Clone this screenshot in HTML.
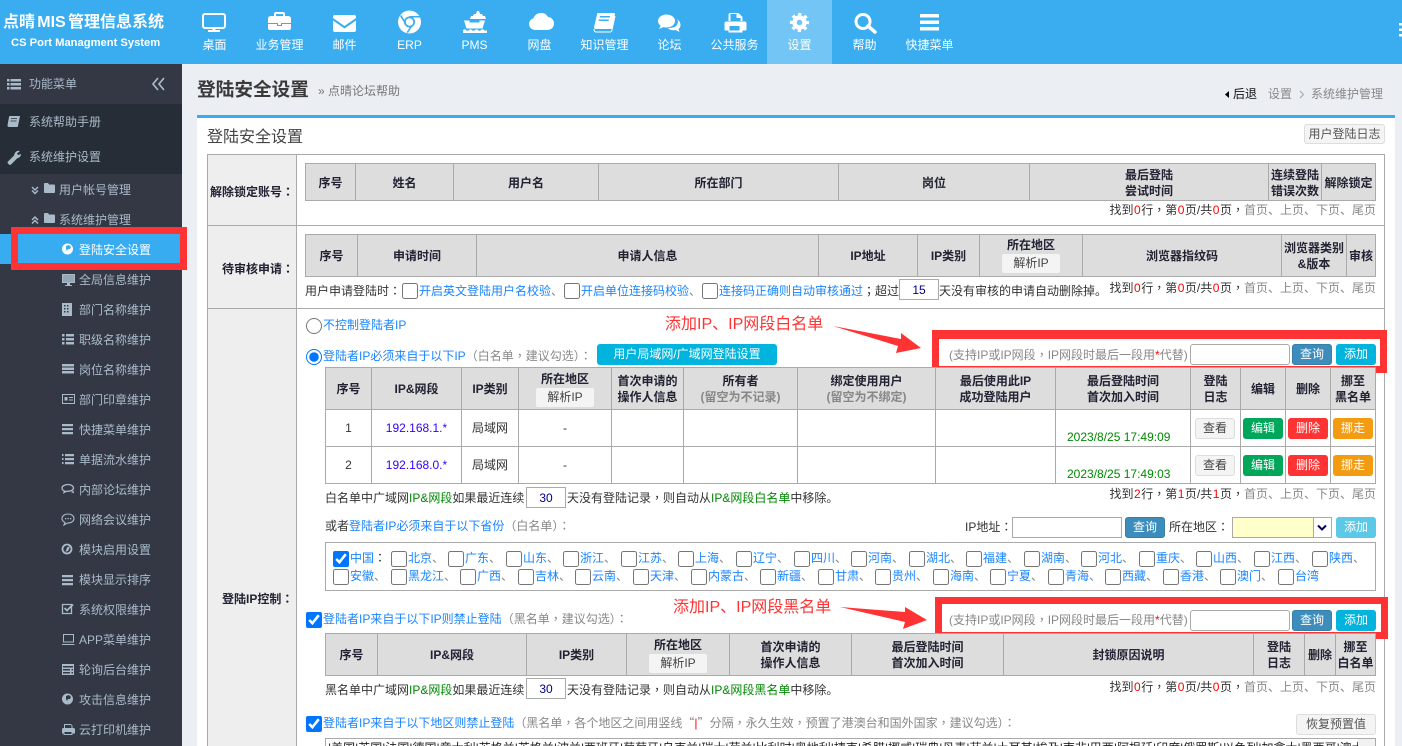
<!DOCTYPE html>
<html><head><meta charset="utf-8"><title>登陆安全设置</title>
<style>
*{box-sizing:border-box}
html,body{margin:0;padding:0;width:1402px;height:746px;overflow:hidden;background:#ebeef3}
body{position:relative;font:12px/16px "Liberation Sans","Noto Sans CJK SC",sans-serif;color:#333}
u{text-decoration:none;font-family:"Noto Sans CJK TC",sans-serif}
em{font-style:normal;font-family:"Noto Sans CJK SC",sans-serif}
.a,.t,.s,.n,.b,input,select{position:absolute}
.t,.s,.n{white-space:nowrap}
.n{top:37px;width:65px;text-align:center;color:#fff}
.s{left:79px;color:#a9bac8;margin-top:1px}
.l{color:#1a85ff}.g{color:#888}.r{color:#f00}.gr{color:#080}.k{color:#333}
.f .r{padding:0 .5px}
.b{height:21px;line-height:19px;text-align:center;border-radius:3px;color:#fff;border:1px solid transparent}
.q{background:#3c8dbc;border-color:#367fa9}.ad{background:#00b4dd}.dis{background:#5bc8e8}
.w{background:#f4f4f4;border-color:#ddd;color:#444}
.gb{background:#00a65a}.rb{background:#f33}.ob{background:#f39c12}
table{position:absolute;border-collapse:separate;border-spacing:0;table-layout:fixed;border-left:1px solid #aaa;border-top:1px solid #aaa}
td,th{border-right:1px solid #aaa;border-bottom:1px solid #aaa;padding:0;text-align:center;vertical-align:middle;overflow:hidden;font-size:12px;line-height:16px}
th{background:#ddd;color:#223;font-weight:700}
th i{font-style:normal;color:#888}
input{margin:0;padding:0}
input[type=checkbox],input[type=radio]{width:16px;height:16px}
input[type=text]{background:#fff;border:1px solid #aaa;text-align:center;color:#008;font:12px "Liberation Sans",sans-serif}
.rbx{border:7px solid #f33}
.rt{color:#f33;font-size:16px;line-height:20px}
.p{color:#1a85ff}
.h{font-weight:700;color:#223}
</style></head><body>

<!-- top bar -->
<div class="a" style="left:0;top:0;width:1402px;height:64px;background:#39adf0"></div>
<div class="a" style="left:767px;top:0;width:65px;height:64px;background:#72c5f5"></div>
<div class="t" style="left:3px;top:13px;color:#fff;font-size:16px;line-height:20px;font-weight:700">点晴<span style="word-spacing:-2.200px"> MIS </span>管理信息系统</div>
<div class="t" style="left:11px;top:35px;color:#fff;font-size:11.200px;font-weight:700">CS Port Managment System</div>

<svg class="a" style="left:0;top:0" width="1402" height="64" fill="#fff">
 <rect x="203" y="14" width="22" height="14" rx="2" fill="none" stroke="#fff" stroke-width="2"/><rect x="212.500" y="28" width="3" height="3"/><rect x="208" y="30" width="12" height="2"/>
 <path d="M268 19q0-3 3-3h3v-2q0-2 2-2h7q2 0 2 2v2h3q3 0 3 3v4h-23zM276 16h7v-2h-7zM268 24h9v2h5v-2h9v4q0 2-2 2h-19q-2 0-2-2zM278 22h3v3h-3z"/>
 <path d="M333 17q0-2 2-2h19q2 0 2 2v1l-11.500 8-11.500-8zM333 20.500l11.500 8 11.500-8V30q0 2-2 2h-19q-2 0-2-2z"/>
 <circle cx="409.500" cy="22" r="11.500"/><circle cx="409.500" cy="22" r="5.500" fill="#39adf0"/><circle cx="409.500" cy="22" r="3.800"/><path d="M409.500 16h10.500v1.500h-10.500zM405 24l-5-8 1.300-1 5 8zM412.500 26l-4.500 7-1.400-.8 4.500-7z" fill="#39adf0"/>
 <path d="M470 19l1-3h2l1-2h2l1-3h2l1 3h2l1 2h2l1 3zM464 20.500h5.500v2h10v-2h5.500l-2.500 8h-16zM463 30q2-1.500 3 0t3 0 3 0 3 0 3 0 3 0 3 0 3 0v3h-24z"/>
 <path d="M535 30a6 6 0 0 1-1.500-11.800A8 8 0 0 1 548 17a6.500 6.500 0 0 1-1 13z"/>
 <path d="M598 13h16q1 0 1 1l-3 14q0 1-1 1h-15q-2 0-2-1.500l3-13q0-1.500 1-1.500z"/><path d="M615 16l-3 14q-.2 2-2 2h-14q-2 0-2-3" fill="none" stroke="#fff"/><path d="M600 16h10l-.4 1.500h-10zM599 19.500h10l-.4 1.500h-10z" fill="#39adf0"/>
 <ellipse cx="666.500" cy="21" rx="8.500" ry="6.500"/><path d="M661 25l-2 4 6-2.500z"/><path d="M676.500 19q4 2 4 6 0 2.500-2 4l1 3-4-2q-2 .5-4 0-2.500-.5-3.500-2 7 0 9-3 1.500-3 .5-6z"/>
 <path d="M729 21v-6q0-2 2-2h8l4 4v4h-2v-3h-4v-4h-6v7zM727 21.500h18q2 0 2 2v6q0 1-1 1h-3v2h-14v-2h-3q-1 0-1-1v-6q0-2 2-2zM730 26v4.500h10V26z" transform="translate(-.500 0)"/>
 <circle cx="799.500" cy="22.500" r="5" fill="none" stroke="#fff" stroke-width="4.400"/><circle cx="799.500" cy="22.500" r="8.300" fill="none" stroke="#fff" stroke-width="2.600" stroke-dasharray="3.300 3.220" stroke-dashoffset="1.650"/>
 <circle cx="863" cy="21.500" r="7" fill="none" stroke="#fff" stroke-width="3"/><path d="M868 26l7 6" stroke="#fff" stroke-width="3.500" stroke-linecap="round"/>
 <path d="M920 14h19v3.500h-19zM920 20.500h19v3.500h-19zM920 27h19v3.500h-19z"/>
 <path d="M1399 23h3v2.500h-3zM1399 28.500h3v2.500h-3zM1399 34h3v2.500h-3z"/>
</svg>

<div class="n" style="left:182px">桌面</div><div class="n" style="left:247px">业务管理</div><div class="n" style="left:312px">邮件</div><div class="n" style="left:377px">ERP</div><div class="n" style="left:442px">PMS</div><div class="n" style="left:507px">网盘</div><div class="n" style="left:572px">知识管理</div><div class="n" style="left:637px">论坛</div><div class="n" style="left:702px">公共服务</div><div class="n" style="left:767px">设置</div><div class="n" style="left:832px">帮助</div><div class="n" style="left:897px">快捷菜单</div>

<!-- sidebar -->
<div class="a" style="left:0;top:64px;width:182px;height:682px;background:#343845"></div>
<div class="a" style="left:0;top:104px;width:182px;height:70px;background:#272d36"></div>
<div class="a" style="left:0;top:234px;width:182px;height:30px;background:#38acf0"></div>
<div class="s" style="left:29px;top:76px;margin-top:0">功能菜单</div>
<div class="s" style="left:29px;top:113px">系统帮助手册</div>
<div class="s" style="left:29px;top:148px">系统维护设置</div>
<div class="s" style="left:59px;top:181px">用户帐号管理</div>
<div class="s" style="left:59px;top:211px">系统维护管理</div>
<div class="s" style="top:241px;color:#fff">登陆安全设置</div>
<div class="s" style="top:271px">全局信息维护</div>
<div class="s" style="top:301px">部门名称维护</div>
<div class="s" style="top:331px">职级名称维护</div>
<div class="s" style="top:361px">岗位名称维护</div>
<div class="s" style="top:391px">部门印章维护</div>
<div class="s" style="top:421px">快捷菜单维护</div>
<div class="s" style="top:451px">单据流水维护</div>
<div class="s" style="top:481px">内部论坛维护</div>
<div class="s" style="top:511px">网络会议维护</div>
<div class="s" style="top:541px">模块启用设置</div>
<div class="s" style="top:571px">模块显示排序</div>
<div class="s" style="top:601px">系统权限维护</div>
<div class="s" style="top:631px">APP菜单维护</div>
<div class="s" style="top:661px">轮询后台维护</div>
<div class="s" style="top:691px">攻击信息维护</div>
<div class="s" style="top:721px">云打印机维护</div>

<svg class="a" style="left:0;top:64px" width="182" height="682" viewBox="0 64 182 682" fill="#a9bac8">
 <path d="M7 79h2.500v2.500H7zM10.500 79H21v2.500H10.500zM7 83h2.500v2.500H7zM10.500 83H21v2.500H10.500zM7 87h2.500v2.500H7zM10.500 87H21v2.500H10.500z"/>
 <path d="M158 78l-5 6 5 6M164 78l-5 6 5 6" fill="none" stroke="#a9bac8" stroke-width="1.700"/>
 <path d="M10 116h10l-2 10q0 1-1 1H9q-1.500 0-1.500-1.500l1.500-8.500q0-1 1-1z"/><path d="M11 118.500h6M10.500 121h6" stroke="#272d36" stroke-width=".8"/>
 <path d="M20 151l-3 2.500 1 1.500 3-1q0 3-3 4l-1 .5-6 6q-1 1-2 0l-1-1q-1-1 0-2l6-6q.5-3 3-4.500 1.500-.5 3 0z"/>
 <path d="M32 187l3 3 3-3M32 190.500l3 3 3-3" fill="none" stroke="#a9bac8" stroke-width="1.500"/>
 <path d="M32 220l3-3 3 3M32 223.500l3-3 3 3" fill="none" stroke="#a9bac8" stroke-width="1.500"/>
 <path d="M44 184q0-1 1-1h3l1 1.500h5q1 0 1 1V192q0 1-1 1h-9q-1 0-1-1zM44 214q0-1 1-1h3l1 1.500h5q1 0 1 1V222q0 1-1 1h-9q-1 0-1-1z"/>
 <circle cx="67.500" cy="249" r="5.500" fill="#fff"/><path d="M66 246l3-1 2 2-1 2-2 0-1 2-1-2z" fill="#38acf0"/>
 <path fill-rule="evenodd" d="M62 274h13v9h-13zM63 275v7h11v-7zM67 283h3v2h2v1h-7v-1h2z"/><rect x="63" y="275" width="11" height="7" opacity=".85"/>
 <path fill-rule="evenodd" d="M62 303h10v13H62zM64 305v1.500h1.500V305zM67 305v1.500h1.500V305zM64 308v1.500h1.500V308zM67 308v1.500h1.500V308zM64 311v1.500h1.500V311zM67 311v1.500h1.500V311z"/>
 <path d="M62 334h2.500v2.500H62zM66 334h8v2.500h-8zM62 338h2.500v2.500H62zM66 338h8v2.500h-8zM62 342h2.500v2.500H62zM66 342h8v2.500h-8z"/>
 <path d="M62 364h12v2.500H62zM62 367.500h12v2.500H62zM62 371h12v2.500H62z"/>
 <path fill-rule="evenodd" d="M62 394h13v10H62zM63 395v8h11v-8zM64.500 397h3v3.500h-3zM69 397h4v1h-4zM69 399.500h4v1h-4z"/>
 <path d="M62 424h11v2.300H62zM62 428h11v2.300H62zM62 432h11v2.300H62z"/>
 <path d="M62 454h1.500v2H62zM65 454h9v2.300h-9zM62 458h1.500v2H62zM65 458h9v2.300h-9zM62 462h1.500v2H62zM65 462h9v2.300h-9z"/>
 <path d="M68 484.500c-3 0-6 1.500-6 3.500 0 1.500 1 2.500 2.500 3l-.5 1.500 2.500-1.200h1.500c3 0 5.500-1.500 5.500-3.300s-2.500-3.500-5.500-3.500z" fill="none" stroke="#a9bac8" stroke-width="1.300"/><path d="M71 492l3 1.500-.5-3z"/>
 <path d="M68 514c-3.500 0-6 2-6 4.500 0 1.800 1.500 3.300 3 4l-1 2.500 3.500-2h.5c3.500 0 6-2 6-4.500s-2.500-4.500-6-4.500z" fill="none" stroke="#a9bac8" stroke-width="1.100"/><path d="M65 518h1.300v1.300H65zM67.500 518h1.300v1.300h-1.300zM70 518h1.300v1.300H70z"/>
 <circle cx="67" cy="549" r="4.500" fill="none" stroke="#a9bac8" stroke-width="1.800"/><path d="M70 546l-1.500 4.500-3 1.500 1.500-4.500z"/>
 <path d="M62 575h11v2.300H62zM62 579h11v2.300H62zM62 583h11v2.300H62z"/>
 <path d="M62.500 604.500h9v9h-9z" fill="none" stroke="#a9bac8" stroke-width="1.300"/><path d="M64.500 608l2.500 2.500 6-6" fill="none" stroke="#a9bac8" stroke-width="1.800"/>
 <path d="M63.500 634.500h10V642h-10z" fill="none" stroke="#a9bac8"/><path d="M62 644h12.500v1H62z"/>
 <path fill-rule="evenodd" d="M62 664h12v11H62zM63 666v1.500h10V666zM63 669v1.500h7V669zM71.500 669v1.500H73V669zM63 672v1.500h7V672zM71.500 672v1.500H73V672z"/>
 <circle cx="67.500" cy="699" r="5.500"/><path d="M66 696l3-1 2 2-1 2-2 0-1 2-1-2z" fill="#343845"/>
 <path fill-rule="evenodd" d="M64 724h7l1.500 1.500V728h1q1.500 0 1.500 1.500v4h-2.500v1.500h-9v-1.500H62v-4q0-1.500 1.500-1.500h.5zM65 725v3h6.500v-2.300l-.7-.7zM64.500 732v2h7v-2z"/>
</svg>
<div class="a rbx" style="left:11px;top:227px;width:176px;height:43px"></div>

<!-- header -->
<div class="t" style="left:197px;top:78px;font-size:18.670px;line-height:24px;font-weight:700;color:#3a3a3a">登陆安全设置</div>
<div class="t" style="left:318px;top:83px;color:#777">» 点晴论坛帮助</div>
<svg class="a" style="left:1225px;top:91px" width="5" height="7"><path d="M4 0v7L0 3.500z" fill="#000"/></svg>
<div class="t" style="left:1233px;top:86px;color:#111">后退</div>
<div class="t" style="left:1268px;top:86px;color:#888">设置</div>
<svg class="a" style="left:1299px;top:90px" width="6" height="9"><path d="M1 1l3.500 3.500L1 8" fill="none" stroke="#9aa" stroke-width="1"/></svg>
<div class="t" style="left:1311px;top:86px;color:#888">系统维护管理</div>

<!-- panel -->
<div class="a" style="left:197px;top:115px;width:1198px;height:631px;background:#fff;border-top:3px solid #38acf0"></div>
<div class="t" style="left:207px;top:127px;font-size:16px;line-height:22px;color:#444">登陆安全设置</div>
<div class="b w" style="left:1304px;top:124px;width:81px;height:20px;line-height:18px;color:#555">用户登陆日志</div>

<!-- outer frame -->
<div class="a" style="left:207px;top:154px;width:1178px;height:592px;border:1px solid #aaa;border-bottom:0"></div>
<div class="a" style="left:208px;top:155px;height:591px;background:#eee;border-right:1px solid #aaa;width:89px"></div>
<div class="a" style="left:208px;top:225px;width:1176px;height:1px;background:#aaa"></div>
<div class="a" style="left:208px;top:308px;width:1176px;height:1px;background:#aaa"></div>
<div class="t h" style="left:210px;top:184px">解除锁定账号<u>：</u></div>
<div class="t h" style="left:222px;top:261px">待审核申请<u>：</u></div>
<div class="t h" style="left:222px;top:591px">登陆IP控制<u>：</u></div>

<!-- table 1 -->
<table style="left:305px;top:163px;width:1071px">
<colgroup><col style="width:50px"><col style="width:98px"><col style="width:145px"><col style="width:240px"><col style="width:191px"><col style="width:239px"><col style="width:53px"><col style="width:54px"></colgroup>
<tr style="height:37px"><th style="padding-top:1px">序号</th><th style="padding-top:1px">姓名</th><th style="padding-top:1px">用户名</th><th style="padding-top:1px">所在部门</th><th style="padding-top:1px">岗位</th><th style="padding-top:1px">最后登陆<br>尝试时间</th><th style="padding-top:1px">连续登陆<br>错误次数</th><th style="padding-top:1px">解除锁定</th></tr>
</table>
<div class="t f" style="right:26px;top:202px">找到<span class="r">0</span>行<u>，</u>第<span class="r">0</span>页/共<span class="r">0</span>页<u>，</u><span class="g">首页、上页、下页、尾页</span></div>

<!-- table 2 -->
<table style="left:305px;top:234px;width:1071px">
<colgroup><col style="width:52px"><col style="width:119px"><col style="width:342px"><col style="width:99px"><col style="width:62px"><col style="width:103px"><col style="width:199px"><col style="width:65px"><col style="width:29px"></colgroup>
<tr style="height:42px"><th>序号</th><th>申请时间</th><th>申请人信息</th><th>IP地址</th><th>IP类别</th><th></th><th>浏览器指纹码</th><th>浏览器类别<br>&amp;版本</th><th>审核</th></tr>
</table>
<div class="t h" style="left:1007px;top:237px">所在地区</div>
<div class="b w" style="left:1001px;top:253px;width:60px">解析IP</div>

<div class="t" style="left:305px;top:283px">用户申请登陆时<u>：</u></div>
<input type="checkbox" style="left:402px;top:283px">
<div class="t l" style="left:419px;top:283px">开启英文登陆用户名校验<span class="g">、</span></div>
<input type="checkbox" style="left:564px;top:283px">
<div class="t l" style="left:581px;top:283px">开启单位连接码校验<span class="g">、</span></div>
<input type="checkbox" style="left:702px;top:283px">
<div class="t l" style="left:719px;top:283px">连接码正确则自动审核通过<span class="k"><u>；</u>超过</span></div>
<input type="text" value="15" style="left:899px;top:279px;width:40px;height:21px">
<div class="t" style="left:939px;top:283px">天没有审核的申请自动删除掉。</div>
<div class="t f" style="right:26px;top:280px">找到<span class="r">0</span>行<u>，</u>第<span class="r">0</span>页/共<span class="r">0</span>页<u>，</u><span class="g">首页、上页、下页、尾页</span></div>

<!-- whitelist -->
<input type="radio" name="x" style="left:306px;top:318px">
<div class="t l" style="left:323px;top:317px">不控制登陆者IP</div>
<input type="radio" name="x" checked style="left:306px;top:349px">
<div class="t l" style="left:323px;top:348px">登陆者IP必须来自于以下IP<span class="g"><u>（</u>白名单<u>，</u>建议勾选<u>）：</u></span></div>
<div class="b" style="left:597px;top:344px;width:180px;background:#00b4dd">用户局域网/广域网登陆设置</div>

<div class="t rt" style="left:665px;top:315px">添加IP、IP网段白名单</div>
<svg class="a" style="left:0;top:0" width="1402" height="746" fill="#f33">
 <path d="M833 326L901 339L901 333L921 348L896 353L898 346z"/>
 <path d="M840 607L905 612L905 607L927 620L903 629L905 622z"/>
</svg>
<div class="a" style="left:932px;top:330px;width:455px;height:43px;border:7px solid #f33;border-top-width:9px"></div>
<div class="t g" style="left:949px;top:347px">(支持IP或IP网段<u>，</u>IP网段时最后一段用<span class="r">*</span>代替)</div>
<input type="text" style="left:1190px;top:344px;width:100px;height:21px;border-radius:3px">
<div class="b q" style="left:1292px;top:344px;width:40px">查询</div>
<div class="b ad" style="left:1336px;top:344px;width:40px">添加</div>

<table style="left:325px;top:367px;width:1051px">
<colgroup><col style="width:46px"><col style="width:90px"><col style="width:57px"><col style="width:93px"><col style="width:72px"><col style="width:114px"><col style="width:138px"><col style="width:120px"><col style="width:135px"><col style="width:50px"><col style="width:45px"><col style="width:45px"><col style="width:45px"></colgroup>
<tr style="height:42px"><th>序号</th><th>IP&amp;网段</th><th>IP类别</th><th></th><th>首次申请的<br>操作人信息</th><th>所有者<br><i>(留空为不记录)</i></th><th>绑定使用用户<br><i>(留空为不绑定)</i></th><th>最后使用此IP<br>成功登陆用户</th><th>最后登陆时间<br>首次加入时间</th><th>登陆<br>日志</th><th>编辑</th><th>删除</th><th>挪至<br>黑名单</th></tr>
<tr style="height:37px"><td>1</td><td style="color:#30f">192.168.1.*</td><td>局域网</td><td>-</td><td></td><td></td><td></td><td></td><td></td><td></td><td></td><td></td><td></td></tr>
<tr style="height:37px"><td>2</td><td style="color:#30f">192.168.0.*</td><td>局域网</td><td>-</td><td></td><td></td><td></td><td></td><td></td><td></td><td></td><td></td><td></td></tr>
</table>
<div class="t h" style="left:541px;top:371px">所在地区</div>
<div class="b w" style="left:535px;top:387px;width:60px">解析IP</div>
<div class="t gr" style="left:1067px;top:429px">2023/8/25 17:49:09</div>
<div class="t gr" style="left:1067px;top:466px">2023/8/25 17:49:03</div>
<div class="b w" style="left:1195px;top:418px;width:40px">查看</div>
<div class="b gb" style="left:1243px;top:418px;width:40px">编辑</div>
<div class="b rb" style="left:1288px;top:418px;width:40px">删除</div>
<div class="b ob" style="left:1333px;top:418px;width:40px">挪走</div>
<div class="b w" style="left:1195px;top:455px;width:40px">查看</div>
<div class="b gb" style="left:1243px;top:455px;width:40px">编辑</div>
<div class="b rb" style="left:1288px;top:455px;width:40px">删除</div>
<div class="b ob" style="left:1333px;top:455px;width:40px">挪走</div>

<div class="t" style="left:325px;top:490px">白名单中广域网<span class="gr">IP&amp;网段</span>如果最近连续</div>
<input type="text" value="30" style="left:526px;top:487px;width:40px;height:21px">
<div class="t" style="left:567px;top:490px">天没有登陆记录<u>，</u>则自动从<span class="gr">IP&amp;网段白名单</span>中移除。</div>
<div class="t f" style="right:26px;top:486px">找到<span class="r">2</span>行<u>，</u>第<span class="r">1</span>页/共<span class="r">1</span>页<u>，</u><span class="g">首页、上页、下页、尾页</span></div>

<div class="t" style="left:325px;top:518px">或者<span class="l">登陆者IP必须来自于以下省份</span><span class="g"><u>（</u>白名单<u>）：</u></span></div>
<div class="t" style="left:965px;top:519px">IP地址<u>：</u></div>
<input type="text" style="left:1012px;top:517px;width:110px;height:21px">
<div class="b q" style="left:1125px;top:517px;width:40px">查询</div>
<div class="t" style="left:1169px;top:519px">所在地区<u>：</u></div>
<div class="a" style="left:1232px;top:517px;width:100px;height:21px;background:#ffc;border:1px solid #aaa"></div>
<div class="a" style="left:1313px;top:518px;width:18px;height:19px;background:#fff;border-left:1px solid #aaa"></div>
<svg class="a" style="left:1316px;top:524px" width="12" height="8"><path d="M2 1.500l4 4 4-4" fill="none" stroke="#006" stroke-width="2"/></svg>
<div class="b dis" style="left:1336px;top:517px;width:40px">添加</div>

<div class="a" style="left:325px;top:542px;width:1051px;height:49px;border:1px solid #aaa"></div>
<input type="checkbox" checked style="left:333px;top:551px"><div class="t l" style="left:350px;top:550px">中国<span class="k"><u>：</u></span></div>
<input type="checkbox" style="left:391px;top:551px"><div class="t p" style="left:408px;top:550px">北京<span class="g">、</span></div>
<input type="checkbox" style="left:448px;top:551px"><div class="t p" style="left:465px;top:550px">广东<span class="g">、</span></div>
<input type="checkbox" style="left:506px;top:551px"><div class="t p" style="left:523px;top:550px">山东<span class="g">、</span></div>
<input type="checkbox" style="left:563px;top:551px"><div class="t p" style="left:580px;top:550px">浙江<span class="g">、</span></div>
<input type="checkbox" style="left:621px;top:551px"><div class="t p" style="left:638px;top:550px">江苏<span class="g">、</span></div>
<input type="checkbox" style="left:678px;top:551px"><div class="t p" style="left:695px;top:550px">上海<span class="g">、</span></div>
<input type="checkbox" style="left:736px;top:551px"><div class="t p" style="left:753px;top:550px">辽宁<span class="g">、</span></div>
<input type="checkbox" style="left:794px;top:551px"><div class="t p" style="left:811px;top:550px">四川<span class="g">、</span></div>
<input type="checkbox" style="left:851px;top:551px"><div class="t p" style="left:868px;top:550px">河南<span class="g">、</span></div>
<input type="checkbox" style="left:909px;top:551px"><div class="t p" style="left:926px;top:550px">湖北<span class="g">、</span></div>
<input type="checkbox" style="left:966px;top:551px"><div class="t p" style="left:983px;top:550px">福建<span class="g">、</span></div>
<input type="checkbox" style="left:1024px;top:551px"><div class="t p" style="left:1041px;top:550px">湖南<span class="g">、</span></div>
<input type="checkbox" style="left:1081px;top:551px"><div class="t p" style="left:1098px;top:550px">河北<span class="g">、</span></div>
<input type="checkbox" style="left:1139px;top:551px"><div class="t p" style="left:1156px;top:550px">重庆<span class="g">、</span></div>
<input type="checkbox" style="left:1196px;top:551px"><div class="t p" style="left:1213px;top:550px">山西<span class="g">、</span></div>
<input type="checkbox" style="left:1254px;top:551px"><div class="t p" style="left:1271px;top:550px">江西<span class="g">、</span></div>
<input type="checkbox" style="left:1312px;top:551px"><div class="t p" style="left:1329px;top:550px">陕西<span class="g">、</span></div>

<input type="checkbox" style="left:333px;top:569px"><div class="t p" style="left:350px;top:568px">安徽<span class="g">、</span></div>
<input type="checkbox" style="left:391px;top:569px"><div class="t p" style="left:408px;top:568px">黑龙江<span class="g">、</span></div>
<input type="checkbox" style="left:460px;top:569px"><div class="t p" style="left:477px;top:568px">广西<span class="g">、</span></div>
<input type="checkbox" style="left:518px;top:569px"><div class="t p" style="left:535px;top:568px">吉林<span class="g">、</span></div>
<input type="checkbox" style="left:575px;top:569px"><div class="t p" style="left:592px;top:568px">云南<span class="g">、</span></div>
<input type="checkbox" style="left:633px;top:569px"><div class="t p" style="left:650px;top:568px">天津<span class="g">、</span></div>
<input type="checkbox" style="left:691px;top:569px"><div class="t p" style="left:708px;top:568px">内蒙古<span class="g">、</span></div>
<input type="checkbox" style="left:760px;top:569px"><div class="t p" style="left:777px;top:568px">新疆<span class="g">、</span></div>
<input type="checkbox" style="left:818px;top:569px"><div class="t p" style="left:835px;top:568px">甘肃<span class="g">、</span></div>
<input type="checkbox" style="left:875px;top:569px"><div class="t p" style="left:892px;top:568px">贵州<span class="g">、</span></div>
<input type="checkbox" style="left:933px;top:569px"><div class="t p" style="left:950px;top:568px">海南<span class="g">、</span></div>
<input type="checkbox" style="left:990px;top:569px"><div class="t p" style="left:1007px;top:568px">宁夏<span class="g">、</span></div>
<input type="checkbox" style="left:1048px;top:569px"><div class="t p" style="left:1065px;top:568px">青海<span class="g">、</span></div>
<input type="checkbox" style="left:1105px;top:569px"><div class="t p" style="left:1122px;top:568px">西藏<span class="g">、</span></div>
<input type="checkbox" style="left:1163px;top:569px"><div class="t p" style="left:1180px;top:568px">香港<span class="g">、</span></div>
<input type="checkbox" style="left:1220px;top:569px"><div class="t p" style="left:1237px;top:568px">澳门<span class="g">、</span></div>
<input type="checkbox" style="left:1278px;top:569px"><div class="t p" style="left:1295px;top:568px">台湾</div>

<!-- blacklist -->
<div class="t rt" style="left:673px;top:598px">添加IP、IP网段黑名单</div>
<div class="a" style="left:935px;top:597px;width:453px;height:42px;border:7px solid #f33"></div>
<input type="checkbox" checked style="left:306px;top:612px">
<div class="t l" style="left:323px;top:611px">登陆者IP来自于以下IP则禁止登陆<span class="g"><u>（</u>黑名单<u>，</u>建议勾选<u>）：</u></span></div>
<div class="t g" style="left:949px;top:612px">(支持IP或IP网段<u>，</u>IP网段时最后一段用<span class="r">*</span>代替)</div>
<input type="text" style="left:1190px;top:610px;width:100px;height:21px;border-radius:3px">
<div class="b q" style="left:1292px;top:610px;width:40px">查询</div>
<div class="b ad" style="left:1336px;top:610px;width:40px">添加</div>

<table style="left:325px;top:633px;width:1051px">
<colgroup><col style="width:52px"><col style="width:149px"><col style="width:100px"><col style="width:103px"><col style="width:122px"><col style="width:152px"><col style="width:250px"><col style="width:51px"><col style="width:31px"><col style="width:40px"></colgroup>
<tr style="height:42px"><th>序号</th><th>IP&amp;网段</th><th>IP类别</th><th></th><th>首次申请的<br>操作人信息</th><th>最后登陆时间<br>首次加入时间</th><th>封锁原因说明</th><th>登陆<br>日志</th><th>删除</th><th>挪至<br>白名单</th></tr>
</table>
<div class="t h" style="left:654px;top:637px">所在地区</div>
<div class="b w" style="left:648px;top:653px;width:60px">解析IP</div>

<div class="t" style="left:325px;top:682px">黑名单中广域网<span class="gr">IP&amp;网段</span>如果最近连续</div>
<input type="text" value="30" style="left:526px;top:678px;width:40px;height:21px">
<div class="t" style="left:567px;top:682px">天没有登陆记录<u>，</u>则自动从<span class="gr">IP&amp;网段黑名单</span>中移除。</div>
<div class="t f" style="right:26px;top:679px">找到<span class="r">0</span>行<u>，</u>第<span class="r">0</span>页/共<span class="r">0</span>页<u>，</u><span class="g">首页、上页、下页、尾页</span></div>

<input type="checkbox" checked style="left:306px;top:716px">
<div class="t l" style="left:323px;top:715px">登陆者IP来自于以下地区则禁止登陆<span class="g"><u>（</u>黑名单<u>，</u>各个地区之间用竖线<em>“</em><span class="r">|</span><em>”</em>分隔<u>，</u>永久生效<u>，</u>预置了港澳台和国外国家<u>，</u>建议勾选<u>）：</u></span></div>
<div class="b w" style="left:1296px;top:714px;width:80px;color:#555">恢复预置值</div>
<div class="a" style="left:325px;top:738px;height:8px;border:1px solid #aaa;border-bottom:0;overflow:hidden;padding:1px 0 0 2px;white-space:nowrap;color:#222;line-height:16px;width:1033px;border-right:0">|美国|英国|法国|德国|意大利|苏格兰|英格兰|波兰|西班牙|葡萄牙|乌克兰|瑞士|荷兰|比利时|奥地利|捷克|希腊|挪威|瑞典|丹麦|芬兰|土耳其|埃及|南非|巴西|阿根廷|印度|俄罗斯|以色列|加拿大|墨西哥|澳大利亚|新西兰|日本|韩国|朝鲜|越南</div>
<div class="a" style="left:1358px;top:738px;width:18px;height:8px;background:#f1f1f1;border-top:1px solid #aaa;border-right:1px solid #aaa"></div>
</body></html>
